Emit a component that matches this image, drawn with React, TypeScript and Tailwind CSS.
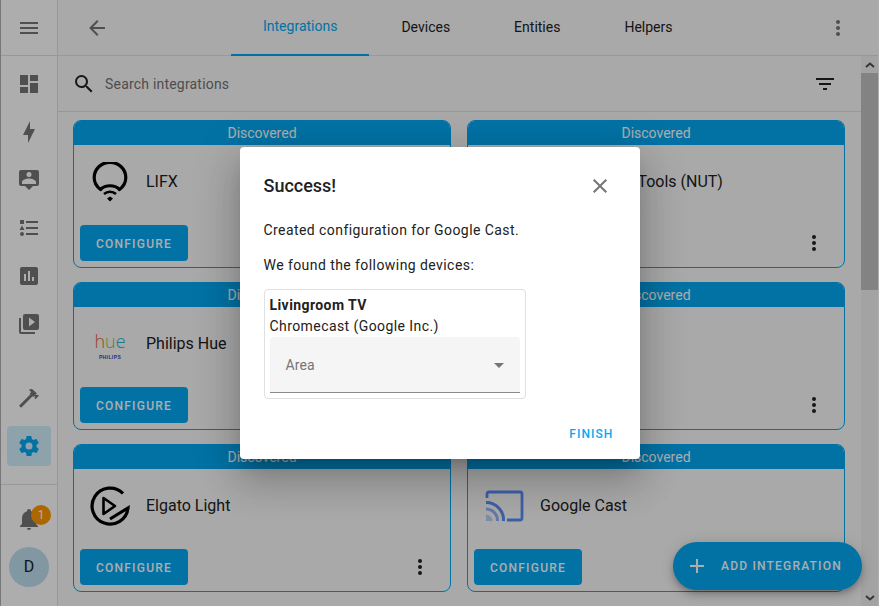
const dashboardIcon = "M13,3V9H21V3M13,21H21V11H13M3,21H11V15H3M3,13H11V3H3V13Z";
const boltIcon = "M11 15H6L13 1V9H18L11 23V15Z";
const logbookIcon =
  "M4,2H20A2,2 0 0,1 22,4V16A2,2 0 0,1 20,18H16L12,22L8,18H4A2,2 0 0,1 2,16V4A2,2 0 0,1 4,2M12,4A2.5,2.5 0 0,0 9.5,6.5A2.5,2.5 0 0,0 12,9A2.5,2.5 0 0,0 14.5,6.5A2.5,2.5 0 0,0 12,4M12,10.5C9.5,10.5 5,11.7 5,14V16H19V14C19,11.7 14.5,10.5 12,10.5Z";
const historyIcon =
  "M5,9.5L7.5,14H2.5L5,9.5M3,4H7V8H3V4M5,20A2,2 0 0,0 7,18A2,2 0 0,0 5,16A2,2 0 0,0 3,18A2,2 0 0,0 5,20M9,5V7H21V5H9M9,19H21V17H9V19M9,13H21V11H9V13Z";
const chartIcon =
  "M19 3H5C3.9 3 3 3.9 3 5V19C3 20.1 3.9 21 5 21H19C20.1 21 21 20.1 21 19V5C21 3.9 20.1 3 19 3M9 17H7V10H9V17M13 17H11V7H13V17M17 17H15V13H17V17Z";
const mediaIcon =
  "M4,6H2V20A2,2 0 0,0 4,22H18V20H4V6M20,2H8A2,2 0 0,0 6,4V16A2,2 0 0,0 8,18H20A2,2 0 0,0 22,16V4A2,2 0 0,0 20,2M12,14.5V5.5L18,10L12,14.5Z";
const hammerIcon =
  "M2 19.63L13.43 8.2L12.72 7.5L14.14 6.07L12 3.89C13.2 2.7 15.09 2.7 16.27 3.89L19.87 7.5L18.45 8.91H21.29L22 9.62L18.45 13.21L17.74 12.5V9.62L16.27 11.04L15.56 10.33L4.13 21.76L2 19.63Z";
const cogIcon =
  "M12,15.5A3.5,3.5 0 0,1 8.5,12A3.5,3.5 0 0,1 12,8.5A3.5,3.5 0 0,1 15.5,12A3.5,3.5 0 0,1 12,15.5M19.43,12.97C19.47,12.65 19.5,12.33 19.5,12C19.5,11.67 19.47,11.34 19.43,11L21.54,9.37C21.73,9.22 21.78,8.95 21.66,8.73L19.66,5.27C19.54,5.05 19.27,4.96 19.05,5.05L16.56,6.05C16.04,5.66 15.5,5.32 14.87,5.07L14.5,2.42C14.46,2.18 14.25,2 14,2H10C9.75,2 9.54,2.18 9.5,2.42L9.13,5.07C8.5,5.32 7.96,5.66 7.44,6.05L4.95,5.05C4.73,4.96 4.46,5.05 4.34,5.27L2.34,8.73C2.21,8.95 2.27,9.22 2.46,9.37L4.57,11C4.53,11.34 4.5,11.67 4.5,12C4.5,12.33 4.53,12.65 4.57,12.97L2.46,14.63C2.27,14.78 2.21,15.05 2.34,15.27L4.34,18.73C4.46,18.95 4.73,19.03 4.95,18.95L7.44,17.94C7.96,18.34 8.5,18.68 9.13,18.93L9.5,21.58C9.54,21.82 9.75,22 10,22H14C14.25,22 14.46,21.82 14.5,21.58L14.87,18.93C15.5,18.67 16.04,18.34 16.56,17.94L19.05,18.95C19.27,19.03 19.54,18.95 19.66,18.73L21.66,15.27C21.78,15.05 21.73,14.78 21.54,14.63L19.43,12.97Z";
const bellIcon =
  "M21,19V20H3V19L5,17V11C5,7.9 7.03,5.17 10,4.29C10,4.19 10,4.1 10,4A2,2 0 0,1 12,2A2,2 0 0,1 14,4C14,4.1 14,4.19 14,4.29C16.97,5.17 19,7.9 19,11V17L21,19M14,21A2,2 0 0,1 12,23A2,2 0 0,1 10,21";
const menuIcon = "M3,6H21V8H3V6M3,11H21V13H3V11M3,16H21V18H3V16Z";
const backIcon = "M20,11V13H8L13.5,18.5L12.08,19.92L4.16,12L12.08,4.08L13.5,5.5L8,11H20Z";
const searchIcon =
  "M9.5,3A6.5,6.5 0 0,1 16,9.5C16,11.11 15.41,12.59 14.44,13.73L14.71,14H15.5L20.5,19L19,20.5L14,15.5V14.71L13.73,14.44C12.59,15.41 11.11,16 9.5,16A6.5,6.5 0 0,1 3,9.5A6.5,6.5 0 0,1 9.5,3M9.5,5C7,5 5,7 5,9.5C5,12 7,14 9.5,14C12,14 14,12 14,9.5C14,7 12,5 9.5,5Z";
const filterIcon = "M6,13H18V11H6M3,6V8H21V6M10,18H14V16H10V18Z";
const dotsIcon =
  "M12,16A2,2 0 0,1 14,18A2,2 0 0,1 12,20A2,2 0 0,1 10,18A2,2 0 0,1 12,16M12,10A2,2 0 0,1 14,12A2,2 0 0,1 12,14A2,2 0 0,1 10,12A2,2 0 0,1 12,10M12,4A2,2 0 0,1 14,6A2,2 0 0,1 12,8A2,2 0 0,1 10,6A2,2 0 0,1 12,4Z";
const closeIcon =
  "M19,6.41L17.59,5L12,10.59L6.41,5L5,6.41L10.59,12L5,17.59L6.41,19L12,13.41L17.59,19L19,17.59L13.41,12L19,6.41Z";
const plusIcon = "M19,13H13V19H11V13H5V11H11V5H13V11H19V13Z";
const menuDownIcon = "M7,10L12,15L17,10H7Z";

function Icon({ d, className }: { d: string; className?: string }) {
  return (
    <svg viewBox="0 0 24 24" className={className ?? "w-6 h-6"} fill="currentColor">
      <path d={d} fillRule="evenodd" />
    </svg>
  );
}

function LifxLogo() {
  return (
    <svg viewBox="0 0 40 40" className="w-10 h-10" fill="none" stroke="#000">
      <path d="M10.500 27.500C6.500 24.500 4.200 20 4.200 15.500A15.800 15.200 0 0 1 35.800 15.500C35.800 20 33.500 24.500 29.500 27.500C24.500 22.500 15.500 22.500 10.500 27.500Z" strokeWidth="3.200" strokeLinejoin="round" />
      <path d="M14 32C17.500 29 22.500 29 26 32" strokeWidth="2.600" />
      <path d="M20 34.500L23 36.500L20 39.500L17 36.500Z" fill="#000" stroke="none" />
    </svg>
  );
}

function HueLogo() {
  return (
    <div className="w-10 pt-1 flex flex-col items-center">
      <div className="text-lg leading-[18px] font-light font-['Open_Sans',sans-serif]">
        <span className="text-[#e0603a]">h</span>
        <span className="text-[#a9b53c]">u</span>
        <span className="text-[#2fb3c4]">e</span>
      </div>
      <div className="mt-1 text-[5px] leading-[6px] font-bold text-[#2a4fc0] font-['Liberation_Sans',sans-serif] tracking-[0.4px]">
        PHILIPS
      </div>
    </div>
  );
}

function ElgatoLogo() {
  return (
    <svg viewBox="0 0 40 40" className="w-10 h-10" fill="none" stroke="#000" strokeWidth="3.200">
      <path d="M33 7.500A18 18 0 1 0 38 22L20 33" />
      <path d="M13.500 12V28L25 20Z" strokeWidth="2.600" strokeLinejoin="round" />
    </svg>
  );
}

function CastLogo() {
  return (
    <svg viewBox="0 0 40 40" className="w-10 h-10" fill="none">
      <path d="M3 12V8A2 2 0 0 1 5 6H36A2 2 0 0 1 38 8V32A2 2 0 0 1 36 34H23" stroke="#5b8df8" strokeWidth="2.800" />
      <path d="M2 16.500A17.500 17.500 0 0 1 19.500 35" stroke="#5b8df8" strokeWidth="3" />
      <path d="M2 23A11.500 11.500 0 0 1 13.500 35" stroke="#93b3f7" strokeWidth="3" />
      <path d="M2 28.500A6.500 6.500 0 0 1 8.500 35H2Z" fill="#bccff7" />
    </svg>
  );
}

function IntegrationCard({
  name,
  logo,
  menu,
}: {
  name: string;
  logo?: React.ReactNode;
  menu?: boolean;
}) {
  return (
    <div className="h-[148px] rounded-lg border border-[#03a9f4] bg-[#fafafa] overflow-hidden flex flex-col">
      <div className="h-6 shrink-0 bg-[#03a9f4] text-white text-sm leading-6 text-center">
        Discovered
      </div>
      <div className="flex items-center h-[74px] pl-4">
        <div className="w-10 h-10 flex items-center justify-center">{logo}</div>
        <div className="ml-4 text-base text-[#212121]">{name}</div>
      </div>
      <div className="flex items-center justify-between pl-1.5 pr-[18px] mt-1.5">
        <button className="h-9 w-[108px] pt-px rounded bg-[#03a9f4] text-white text-xs font-medium tracking-[1.25px]">
          CONFIGURE
        </button>
        {menu && <Icon d={dotsIcon} className="w-6 h-6 text-[#212121]" />}
      </div>
    </div>
  );
}

function NavItem({ d, active }: { d: string; active?: boolean }) {
  return (
    <div className="h-12 py-1 pl-1.5 pr-1.5">
      <div
        className={`h-10 w-11 rounded flex items-center justify-center ${
          active ? "bg-[#03a9f4]/[0.18] text-[#03a9f4]" : "text-[#757575]"
        }`}
      >
        <Icon d={d} />
      </div>
    </div>
  );
}

export default function App() {
  return (
    <div className="relative h-[606px] w-[879px] overflow-hidden flex bg-[#fafafa] font-['Roboto',sans-serif]">
      {/* Sidebar */}
      <aside className="w-[58px] shrink-0 flex flex-col bg-white border-l border-r border-l-[#b0b0b0] border-r-[#e0e0e0]">
        <div className="h-14 shrink-0 border-b border-[#e0e0e0] flex items-center justify-center text-[#757575]">
          <Icon d={menuIcon} />
        </div>
        <div className="pt-1">
          <NavItem d={dashboardIcon} />
          <NavItem d={boltIcon} />
          <NavItem d={logbookIcon} />
          <NavItem d={historyIcon} />
          <NavItem d={chartIcon} />
          <NavItem d={mediaIcon} />
        </div>
        <div className="mt-[26px]">
          <NavItem d={hammerIcon} />
          <NavItem d={cogIcon} active />
        </div>
        <div className="mt-3.5 border-t border-[#e0e0e0] pt-[10px]">
          <div className="relative h-12 flex items-center justify-center text-[#757575]">
            <Icon d={bellIcon} />
            <div className="absolute left-[30px] top-[10px] w-5 h-5 rounded-full bg-[#ff9800] text-white text-xs flex items-center justify-center">
              1
            </div>
          </div>
          <div className="mt-1 ml-2 w-10 h-10 rounded-full bg-[#bfdfee] text-[#212121] text-base flex items-center justify-center">
            D
          </div>
        </div>
      </aside>

      <div className="flex-1 min-w-0 flex flex-col pr-px bg-white">
        <div className="flex-1 min-h-0 flex flex-col bg-[#fafafa]">
          {/* Top bar */}
          <header className="h-14 shrink-0 border-b border-[#e0e0e0] flex items-stretch">
            <div className="w-[173px] pl-[27px] flex items-center text-[#757575]">
              <Icon d={backIcon} />
            </div>
            <nav className="flex text-sm text-[#212121]">
              <div className="px-8 pt-[18px] -mb-px border-b-2 border-[#03a9f4] text-[#03a9f4] leading-4">
                Integrations
              </div>
              <div className="px-8 pt-[19px] leading-4">Devices</div>
              <div className="px-8 pt-[19px] leading-4">Entities</div>
              <div className="px-8 pt-[19px] leading-4">Helpers</div>
            </nav>
            <div className="ml-auto pr-7 flex items-center text-[#757575]">
              <Icon d={dotsIcon} />
            </div>
          </header>

          <div className="flex-1 min-h-0 flex">
            <main className="flex-1 min-w-0">
              {/* Search */}
              <div className="h-14 border-b border-[#e0e0e0] flex items-center pl-3.5 pr-6">
                <Icon d={searchIcon} className="w-6 h-6 text-[#212121]" />
                <span className="ml-[9px] text-sm tracking-[0.2px] text-[#727272]">Search integrations</span>
                <Icon d={filterIcon} className="ml-auto w-6 h-6 text-[#212121]" />
              </div>
              {/* Cards */}
              <div className="grid grid-cols-[378px_378px] gap-x-4 gap-y-3.5 pl-[15px] pt-2">
                <IntegrationCard name="LIFX" logo={<LifxLogo />} menu />
                <IntegrationCard name="Network UPS Tools (NUT)" menu />
                <IntegrationCard name="Philips Hue" logo={<HueLogo />} menu />
                <IntegrationCard name="Sonos" menu />
                <IntegrationCard name="Elgato Light" logo={<ElgatoLogo />} menu />
                <IntegrationCard name="Google Cast" logo={<CastLogo />} />
              </div>
            </main>
            {/* Scrollbar */}
            <div className="w-[17px] shrink-0 bg-[#f1f1f1] flex flex-col">
              <div className="h-[17px] flex items-center justify-center text-[#505050]">
                <svg viewBox="0 0 10 6" className="w-2.5 h-1.5" fill="none" stroke="currentColor" strokeWidth="2">
                  <path d="M1 5L5 1.500L9 5" />
                </svg>
              </div>
              <div className="h-[217px] bg-[#c1c1c1]" />
              <div className="flex-1" />
              <div className="h-[17px] flex items-center justify-center text-[#505050]">
                <svg viewBox="0 0 10 6" className="w-2.5 h-1.5" fill="none" stroke="currentColor" strokeWidth="2">
                  <path d="M1 1L5 4.500L9 1" />
                </svg>
              </div>
            </div>
          </div>
        </div>
      </div>

      {/* Floating action button */}
      <button className="absolute left-[673px] top-[542px] w-[189px] h-12 rounded-3xl bg-[#03a9f4] text-white flex items-center pl-3 shadow-[0_3px_5px_-1px_rgba(0,0,0,0.2),0_6px_10px_0_rgba(0,0,0,0.14),0_1px_18px_0_rgba(0,0,0,0.12)]">
        <Icon d={plusIcon} />
        <span className="ml-3 text-xs font-medium tracking-[1.2px]">ADD INTEGRATION</span>
      </button>

      {/* Dialog */}
      <div className="absolute inset-0 bg-black/[0.32] flex items-center justify-center">
        <div className="w-[400px] h-[312px] rounded bg-white text-[#212121] flex flex-col pl-6 pr-7 pt-[26px] shadow-[0_11px_15px_-7px_rgba(0,0,0,0.2),0_24px_38px_3px_rgba(0,0,0,0.14),0_9px_46px_8px_rgba(0,0,0,0.12)]">
          <div className="flex items-center justify-between h-[26px]">
            <h2 className="text-lg font-medium leading-[26px]">Success!</h2>
            <Icon d={closeIcon} className="w-6 h-6 text-[#757575]" />
          </div>
          <p className="mt-[21px] text-sm leading-5 tracking-[0.43px]">Created configuration for Google Cast.</p>
          <p className="mt-[15px] text-sm leading-5 tracking-[0.43px]">We found the following devices:</p>
          <div className="mt-3.5 w-[262px] h-[110px] rounded border border-[#e0e0e0] px-[5px] pt-[5px] text-sm tracking-[0.42px]">
            <div className="font-bold leading-5">Livingroom TV</div>
            <div className="leading-5 mt-px">Chromecast (Google Inc.)</div>
            <div className="h-14 mt-px rounded-t bg-[#f5f5f5] border-b border-[#8a8a8a] flex items-center justify-between pl-4 pr-[9px]">
              <span className="text-[#757575] tracking-[0.1px]">Area</span>
              <Icon d={menuDownIcon} className="w-6 h-6 text-[#757575]" />
            </div>
          </div>
          <button className="mt-[27px] -mr-0.5 self-end text-xs font-medium tracking-[1.1px] text-[#03a9f4]">FINISH</button>
        </div>
      </div>
    </div>
  );
}
